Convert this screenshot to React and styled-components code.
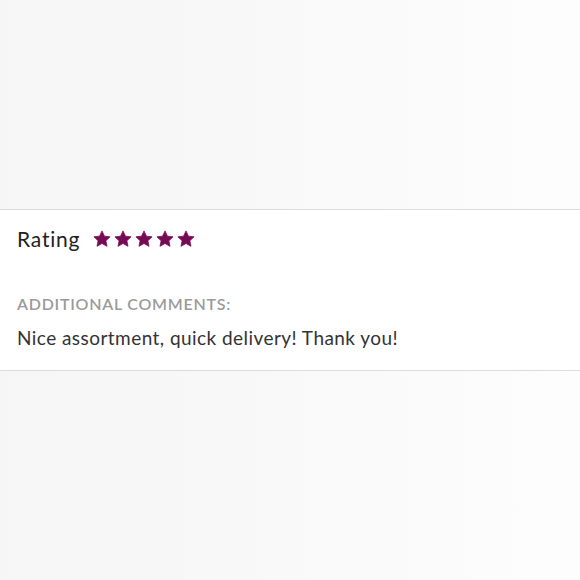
import React from "react";
import styled, { createGlobalStyle } from "styled-components";

const Global = createGlobalStyle`
  html, body { margin: 0; padding: 0; }
  body {
    width: 580px;
    height: 580px;
    overflow: hidden;
    background: #f9f8f8;
    font-family: "Lato", "Open Sans", sans-serif;
  }
`;

const Page = styled.div`
  width: 580px;
  height: 580px;
  display: flex;
  flex-direction: column;
  background: linear-gradient(90deg, #f7f6f6 0%, #f9f8f8 40%, #fdfdfd 100%);
`;

const Backdrop = styled.div`
  height: ${(p) => p.$h}px;
  flex: ${(p) => (p.$grow ? 1 : "none")};
`;

const Card = styled.section`
  background: #ffffff;
  border-top: 1px solid #dcdcdc;
  border-bottom: 1px solid #dcdcdc;
  height: 162px;
  padding: 15px 17px 0;
  box-sizing: border-box;
  display: flex;
  flex-direction: column;
`;

const RatingRow = styled.div`
  display: flex;
  align-items: center;
  gap: 13px;
  height: 26px;
`;

const RatingLabel = styled.span`
  font-size: 21px;
  color: #222;
  letter-spacing: 0.8px;
`;

const Stars = styled.div`
  display: flex;
  gap: 3px;
  padding-top: 1px;
`;

const Star = () => (
  <svg width="18" height="18" viewBox="0 0 24 24">
    <path
      d="M12 1.2l3.3 7 7.5.9-5.6 5.2 1.5 7.5L12 18l-6.7 3.8 1.5-7.5L1.2 9.1l7.5-.9z"
      fill="#770a55"
      strokeLinejoin="round"
      stroke="#770a55"
      strokeWidth="1"
    />
  </svg>
);

const SectionLabel = styled.div`
  margin-top: 43px;
  font-size: 16px;
  font-weight: 600;
  color: #9a9a9a;
  letter-spacing: 0.75px;
  text-transform: uppercase;
`;

const Comment = styled.p`
  margin: 13px 0 0;
  font-size: 19px;
  color: #333;
  letter-spacing: 0.45px;
`;

export default function App() {
  return (
    <>
      <Global />
      <Page>
        <Backdrop $h={209} />
        <Card>
          <RatingRow>
            <RatingLabel>Rating</RatingLabel>
            <Stars>
              {[0, 1, 2, 3, 4].map((i) => (
                <Star key={i} />
              ))}
            </Stars>
          </RatingRow>
          <SectionLabel>Additional comments:</SectionLabel>
          <Comment>Nice assortment, quick delivery! Thank you!</Comment>
        </Card>
        <Backdrop $grow />
      </Page>
    </>
  );
}
